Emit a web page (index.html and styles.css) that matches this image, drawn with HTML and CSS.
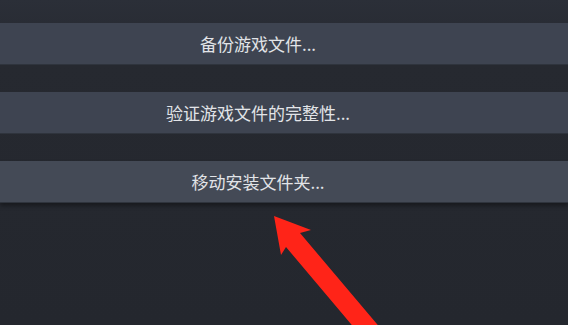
FILE: index.html
```html
<!DOCTYPE html>
<html lang="zh-CN">
<head>
  <meta charset="UTF-8" />
  <meta name="viewport" content="width=device-width, initial-scale=1.0" />
  <title>属性 - 本地文件</title>
  <link rel="stylesheet" href="styles.css">
</head>
<body>
  <div class="panel">
    <div class="action-btn">备份游戏文件...</div>
    <div class="action-btn">验证游戏文件的完整性...</div>
    <div class="action-btn last">移动安装文件夹...</div>
  </div>
  <svg class="arrow" width="568" height="325" viewBox="0 0 568 325">
    <polygon fill="#ff2418" points="274,216 311,230 300,233 382,330 356,330 286,247 281,255" />
  </svg>
</body>
</html>
```

FILE: styles.css
```css
* { box-sizing: border-box; margin: 0; padding: 0; }
html, body { width: 568px; height: 325px; overflow: hidden; }
body {
  font-family: "Noto Sans CJK SC", "Noto Sans", sans-serif;
  background: linear-gradient(180deg, #2b2f38 0px, #262930 60px, #24272e 325px);
  color: #e2e4e8;
  position: relative;
}
.panel {
  display: flex; flex-direction: column;
  gap: 27px; padding-top: 23px;
}
.action-btn {
  height: 42px; line-height: 41px;
  padding-right: 52px;
  text-align: center; font-size: 17px;
  background: #3e4451;
  border-bottom: 1px solid #2f343d;
}
.action-btn.last {
  background: #444a56;
  box-shadow: 0 3px 4px rgba(0,0,0,0.35);
}
.arrow { position: absolute; top: 0; left: 0; }
```
